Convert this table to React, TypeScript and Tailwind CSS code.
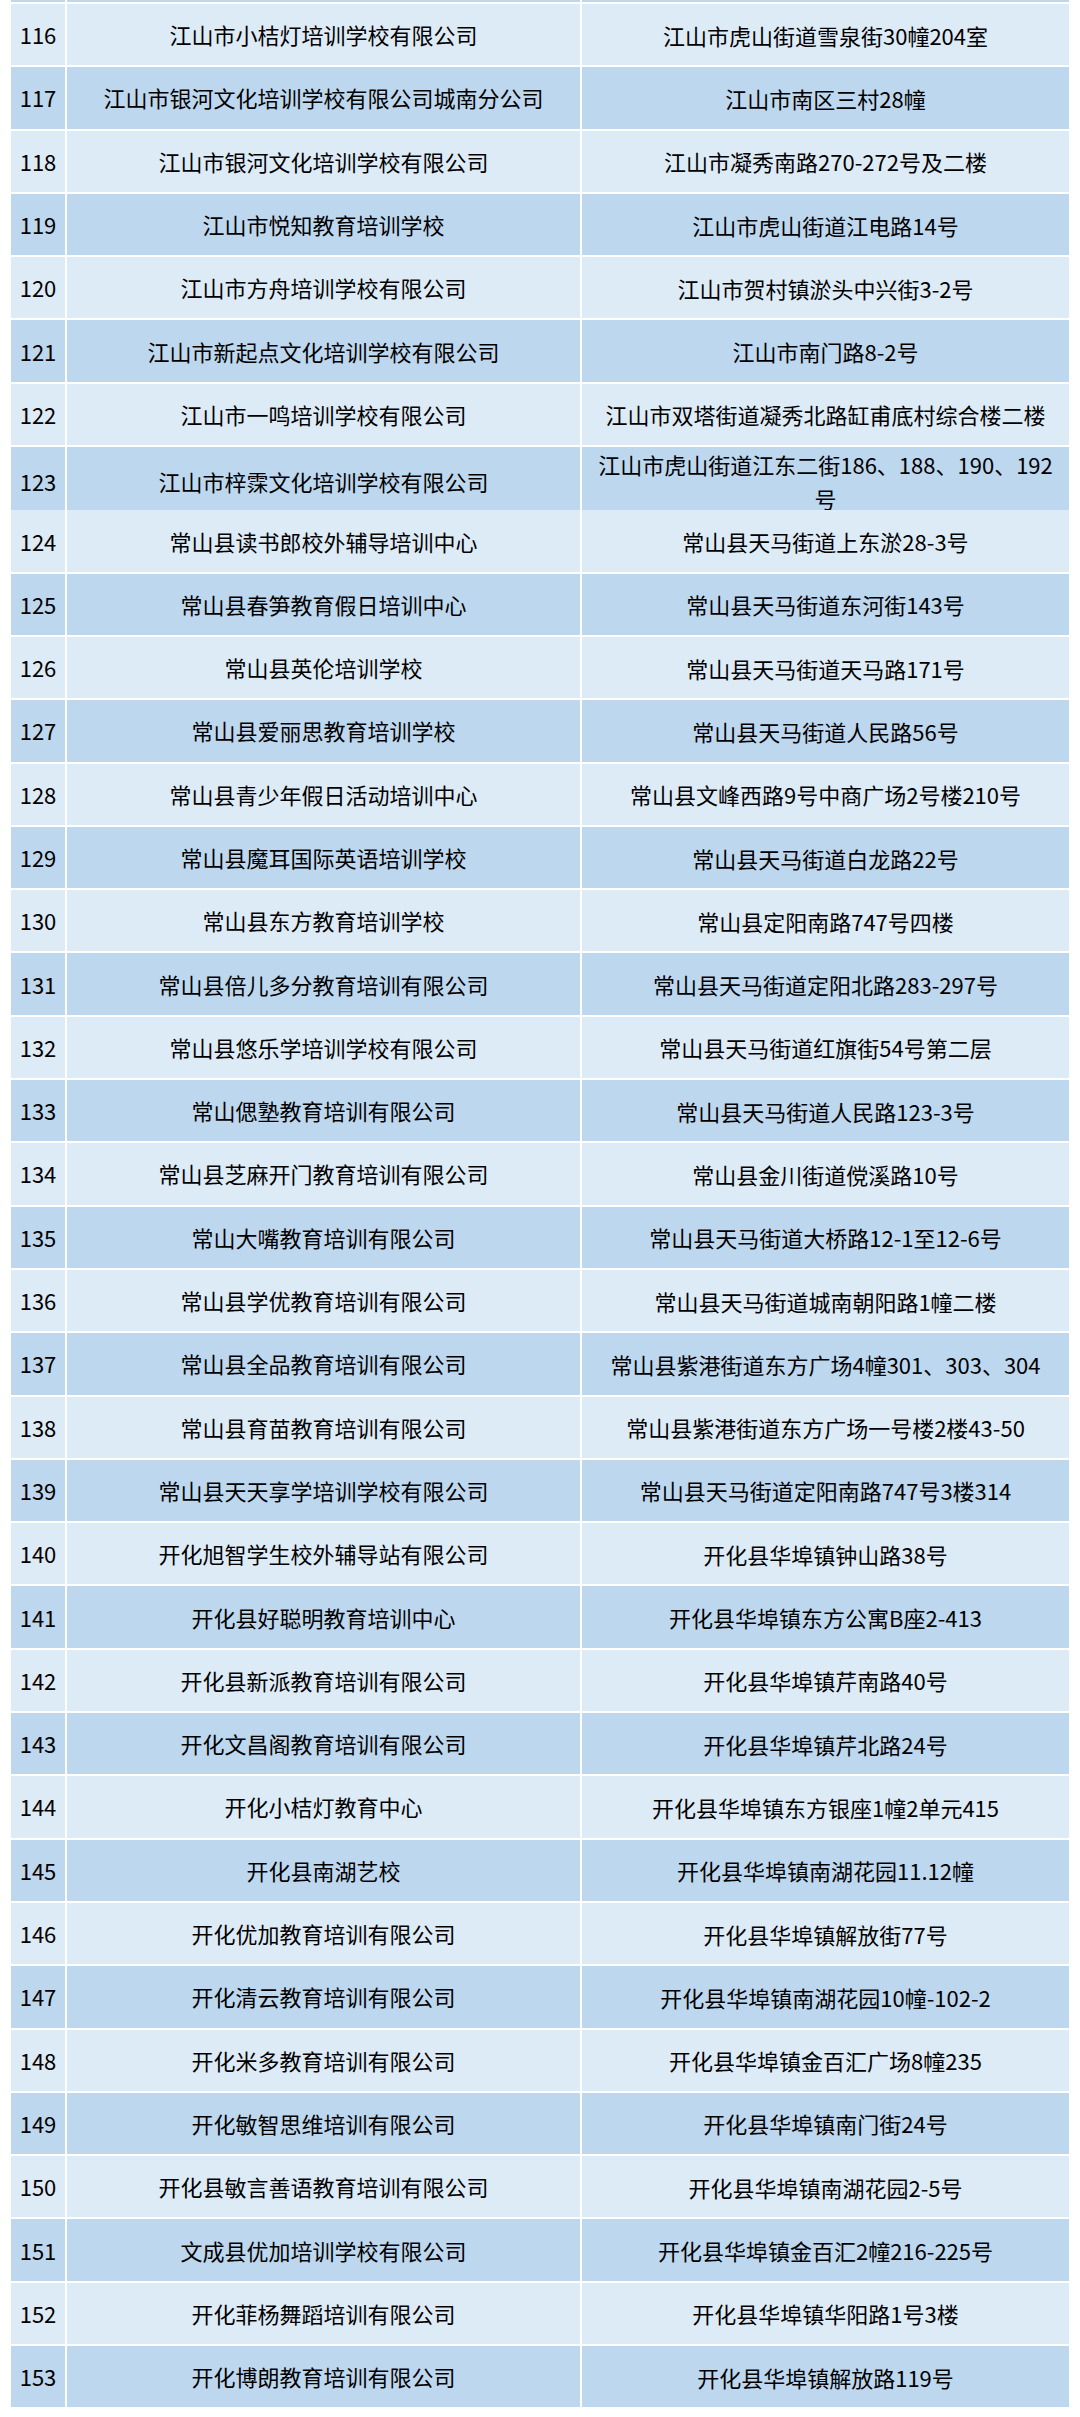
import React from "react";

const rows: [number, string, React.ReactNode][] = [
  [116, "江山市小桔灯培训学校有限公司", "江山市虎山街道雪泉街30幢204室"],
  [117, "江山市银河文化培训学校有限公司城南分公司", "江山市南区三村28幢"],
  [118, "江山市银河文化培训学校有限公司", "江山市凝秀南路270-272号及二楼"],
  [119, "江山市悦知教育培训学校", "江山市虎山街道江电路14号"],
  [120, "江山市方舟培训学校有限公司", "江山市贺村镇淤头中兴街3-2号"],
  [121, "江山市新起点文化培训学校有限公司", "江山市南门路8-2号"],
  [122, "江山市一鸣培训学校有限公司", "江山市双塔街道凝秀北路缸甫底村综合楼二楼"],
  [
    123,
    "江山市梓霂文化培训学校有限公司",
    <>
      江山市虎山街道江东二街186、188、190、192
      <br />号
    </>,
  ],
  [124, "常山县读书郎校外辅导培训中心", "常山县天马街道上东淤28-3号"],
  [125, "常山县春笋教育假日培训中心", "常山县天马街道东河街143号"],
  [126, "常山县英伦培训学校", "常山县天马街道天马路171号"],
  [127, "常山县爱丽思教育培训学校", "常山县天马街道人民路56号"],
  [128, "常山县青少年假日活动培训中心", "常山县文峰西路9号中商广场2号楼210号"],
  [129, "常山县魔耳国际英语培训学校", "常山县天马街道白龙路22号"],
  [130, "常山县东方教育培训学校", "常山县定阳南路747号四楼"],
  [131, "常山县倍儿多分教育培训有限公司", "常山县天马街道定阳北路283-297号"],
  [132, "常山县悠乐学培训学校有限公司", "常山县天马街道红旗街54号第二层"],
  [133, "常山偲塾教育培训有限公司", "常山县天马街道人民路123-3号"],
  [134, "常山县芝麻开门教育培训有限公司", "常山县金川街道傥溪路10号"],
  [135, "常山大嘴教育培训有限公司", "常山县天马街道大桥路12-1至12-6号"],
  [136, "常山县学优教育培训有限公司", "常山县天马街道城南朝阳路1幢二楼"],
  [137, "常山县全品教育培训有限公司", "常山县紫港街道东方广场4幢301、303、304"],
  [138, "常山县育苗教育培训有限公司", "常山县紫港街道东方广场一号楼2楼43-50"],
  [139, "常山县天天享学培训学校有限公司", "常山县天马街道定阳南路747号3楼314"],
  [140, "开化旭智学生校外辅导站有限公司", "开化县华埠镇钟山路38号"],
  [141, "开化县好聪明教育培训中心", "开化县华埠镇东方公寓B座2-413"],
  [142, "开化县新派教育培训有限公司", "开化县华埠镇芹南路40号"],
  [143, "开化文昌阁教育培训有限公司", "开化县华埠镇芹北路24号"],
  [144, "开化小桔灯教育中心", "开化县华埠镇东方银座1幢2单元415"],
  [145, "开化县南湖艺校", "开化县华埠镇南湖花园11.12幢"],
  [146, "开化优加教育培训有限公司", "开化县华埠镇解放街77号"],
  [147, "开化清云教育培训有限公司", "开化县华埠镇南湖花园10幢-102-2"],
  [148, "开化米多教育培训有限公司", "开化县华埠镇金百汇广场8幢235"],
  [149, "开化敏智思维培训有限公司", "开化县华埠镇南门街24号"],
  [150, "开化县敏言善语教育培训有限公司", "开化县华埠镇南湖花园2-5号"],
  [151, "文成县优加培训学校有限公司", "开化县华埠镇金百汇2幢216-225号"],
  [152, "开化菲杨舞蹈培训有限公司", "开化县华埠镇华阳路1号3楼"],
  [153, "开化博朗教育培训有限公司", "开化县华埠镇解放路119号"],
];

export default function App() {
  return (
    <div
      className="w-[1080px] h-[2417px] bg-white pl-[11px] overflow-hidden text-black"
      style={{ fontFamily: '"Noto Sans CJK SC", "Noto Sans", sans-serif' }}
    >
      <div className="w-[1058px] flex flex-col gap-[2px] bg-white">
        <div className="grid grid-cols-[54px_513px_487px] gap-x-[2px] h-[2px]">
          <div className="bg-[#bdd7ee]" />
          <div className="bg-[#bdd7ee]" />
          <div className="bg-[#bdd7ee]" />
        </div>
        {rows.map(([n, name, addr], i) => {
          const bg = i % 2 === 0 ? "bg-[#ddebf7]" : "bg-[#bdd7ee]";
          return (
            <div
              key={n}
              className="grid grid-cols-[54px_513px_487px] gap-x-[2px] h-[61.3px] text-[22px]"
            >
              <div className={`${bg} flex items-center justify-center`}>{n}</div>
              <div className={`${bg} flex items-center justify-center text-center px-1`}>
                {name}
              </div>
              <div
                className={`${bg} flex items-center justify-center text-center px-1 leading-[34px]`}
              >
                <span>{addr}</span>
              </div>
            </div>
          );
        })}
      </div>
    </div>
  );
}
